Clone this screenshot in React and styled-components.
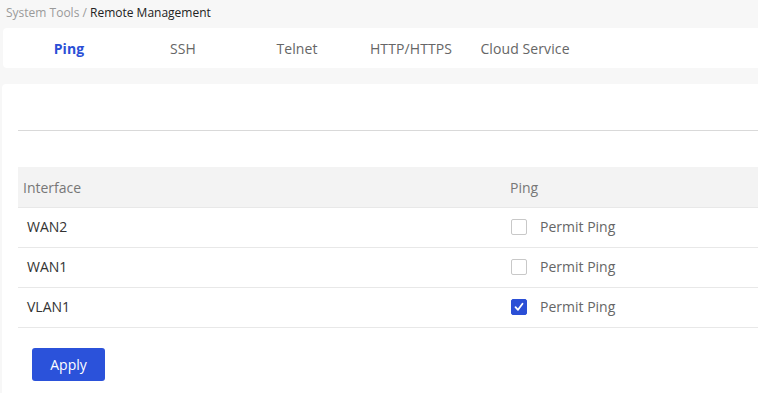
import React, { useState } from 'react'
import styled, { createGlobalStyle } from 'styled-components';

const GlobalStyle = createGlobalStyle`
  body {
    margin: 0;
    background: #f7f7f7;
    font-family: "Open Sans", "Noto Sans", sans-serif;
  }
`

const Page = styled.div`
  width: 758px;
  height: 393px;
  overflow: hidden;
  display: flex;
  flex-direction: column;
`

const Breadcrumb = styled.div`
  height: 28px;
  padding: 4px 0 0 6px;
  box-sizing: border-box;
  font-size: 12px;
  color: #9a9a9a;
  span { color: #222; }
`

const TabBar = styled.div`
  margin-left: 3px;
  height: 40px;
  background: #fff;
  border-radius: 4px 0 0 4px;
  display: flex;
  padding-left: 9px;
`

const Tab = styled.div`
  width: 114px;
  display: flex;
  align-items: center;
  justify-content: center;
  font-size: 14px;
  letter-spacing: 0.1px;
  color: ${p => p.active ? '#2b4fd6' : '#666'};
  font-weight: ${p => p.active ? 700 : 400};
`

const Card = styled.div`
  margin: 16px 0 0 2px;
  flex: 1;
  background: #fff;
  border-radius: 4px 0 0 0;
  padding: 46px 0 0 16px;
`

const Divider = styled.div`
  border-top: 1px solid #d9d9d9;
  margin-bottom: 36px;
`

const Table = styled.div`
  display: flex;
  flex-direction: column;
`

const Row = styled.div`
  display: grid;
  grid-template-columns: 492px 1fr;
  height: ${p => p.head ? 41 : 40}px;
  padding-bottom: ${p => p.head ? 0 : 2}px;
  align-items: center;
  border-bottom: 1px solid #e8e8e8;
  box-sizing: border-box;
  background: ${p => p.head ? '#f3f3f3' : '#fff'};
  font-size: 14px;
  color: ${p => p.head ? '#777' : '#333'};
`

const Cell = styled.div`
  padding-left: ${p => p.pad}px;
  display: flex;
  align-items: center;
`

const Box = styled.span`
  width: 14px;
  height: 14px;
  border-radius: 2px;
  border: 1px solid ${p => p.checked ? '#2b4fd6' : '#c8c8c8'};
  background: ${p => p.checked ? '#2b4fd6' : '#fff'};
  display: inline-flex;
  align-items: center;
  justify-content: center;
  margin-right: 13px;
  cursor: pointer;
`

const CheckLabel = styled.label`
  display: flex;
  align-items: center;
  color: #666;
  cursor: pointer;
`

const ApplyButton = styled.button`
  margin: 20px 0 0 14px;
  width: 73px;
  height: 33px;
  border: none;
  border-radius: 3px;
  background: #2b52da;
  color: #fff;
  font-family: inherit;
  font-size: 14px;
  cursor: pointer;
`

const tabs = ['Ping', 'SSH', 'Telnet', 'HTTP/HTTPS', 'Cloud Service']

const App = () => {
    const [perms, setPerms] = useState({ WAN2: false, WAN1: false, VLAN1: true });

    const toggle = (name) => setPerms({ ...perms, [name]: !perms[name] });

    return (
        <Page>
            <GlobalStyle />
            <Breadcrumb>System Tools / <span>Remote Management</span></Breadcrumb>
            <TabBar>
                {tabs.map(t => <Tab key={t} active={t === 'Ping'}>{t}</Tab>)}
            </TabBar>
            <Card>
                <Divider />
                <Table>
                    <Row head>
                        <Cell pad={5}>Interface</Cell>
                        <Cell pad={0}>Ping</Cell>
                    </Row>
                    {Object.keys(perms).map(name => (
                        <Row key={name}>
                            <Cell pad={9}>{name}</Cell>
                            <Cell pad={1}>
                                <CheckLabel onClick={() => toggle(name)}>
                                    <Box checked={perms[name]}>
                                        {perms[name] && (
                                            <svg width="10" height="10" viewBox="0 0 10 10">
                                                <path d="M1.5 5.2 L4 7.8 L8.5 1.8" fill="none" stroke="#fff" strokeWidth="1.8" strokeLinecap="round" strokeLinejoin="round" />
                                            </svg>
                                        )}
                                    </Box>
                                    Permit Ping
                                </CheckLabel>
                            </Cell>
                        </Row>
                    ))}
                </Table>
                <ApplyButton>Apply</ApplyButton>
            </Card>
        </Page>
    )
}

export default App
